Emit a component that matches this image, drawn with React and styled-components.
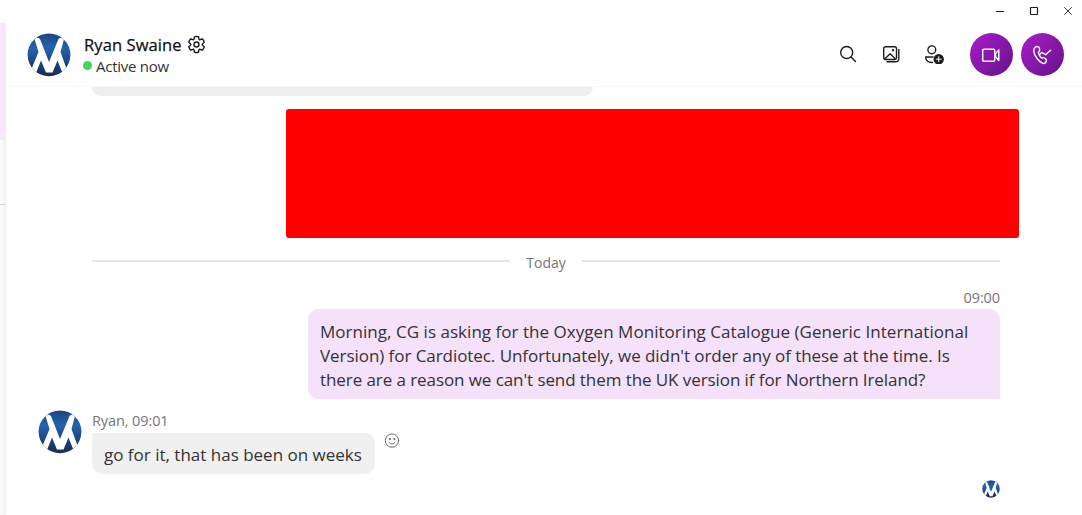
import React from "react";
import styled, { createGlobalStyle } from "styled-components";

const GlobalStyle = createGlobalStyle`
  * {
    box-sizing: border-box;
  }

  body {
    margin: 0;
    background: #ffffff;
    overflow: hidden;
    font-family: "Open Sans", "Noto Sans", sans-serif;
    color: #212121;
  }
`;

const Window = styled.div`
  display: flex;
  width: 1082px;
  height: 515px;
  background: #ffffff;
`;

const Sidebar = styled.div`
  display: flex;
  flex-direction: column;
  flex: none;
  width: 6px;
  padding-top: 23px;
`;

const SidebarItem = styled.div`
  flex: ${props => (props.$height ? "none" : 1)};
  height: ${props => (props.$height ? `${props.$height}px` : "auto")};
  background: ${props =>
    props.$active
      ? "linear-gradient(90deg, #f7e6fc 0 3px, #f3e6f7 5px, #f4f1f5 6px)"
      : "linear-gradient(90deg, #fcfcfc, #f8f8f8 3px, #efefef 6px)"};
  border-bottom: ${props => (props.$line ? "1px solid #dcdcdc" : "none")};
`;

const Main = styled.div`
  display: flex;
  flex-direction: column;
  flex: 1;
  min-width: 0;
`;

const TitleBar = styled.div`
  display: flex;
  flex: none;
  justify-content: flex-end;
  height: 23px;
  padding: 6px 9px 0 0;
  gap: 24px;
`;

const Header = styled.header`
  display: flex;
  align-items: center;
  flex: none;
  height: 64px;
  padding: 0 18px 0 21px;
  border-bottom: 1px solid #f8f8f8;
`;

const Contact = styled.div`
  display: flex;
  flex-direction: column;
  flex: 1;
  margin-left: 13px;
`;

const Name = styled.div`
  display: flex;
  align-items: center;
  gap: 5px;
  height: 22px;
  font-size: 16.5px;
  font-weight: 500;
  white-space: nowrap;
  color: #111111;
  -webkit-text-stroke: 0.25px #111111;
`;

const Status = styled.div`
  display: flex;
  align-items: center;
  gap: 4px;
  height: 21px;
  font-size: 15px;
  color: #333333;
`;

const Dot = styled.span`
  width: 9px;
  height: 9px;
  margin-left: -1px;
  border-radius: 50%;
  background: #43d65a;
`;

const Actions = styled.div`
  display: flex;
  align-items: center;
  gap: 23px;
  margin: -1px 26px 0 0;
`;

const Calls = styled.div`
  display: flex;
  gap: 8px;
`;

const CallButton = styled.button`
  display: flex;
  align-items: center;
  justify-content: center;
  width: 43px;
  height: 43px;
  padding: 0 1px 0 0;
  border: none;
  border-radius: 50%;
  background: linear-gradient(135deg, #a31bc4 10%, #6b148f 90%);
`;

const Chat = styled.main`
  display: flex;
  flex-direction: column;
  flex: 1;
  width: 994px;
  padding-left: 86px;
`;

const PreviousBubble = styled.div`
  flex: none;
  width: 501px;
  height: 9px;
  border-radius: 0 0 10px 10px;
  background: #efefef;
`;

const Redacted = styled.div`
  flex: none;
  align-self: flex-end;
  width: 733px;
  height: 129px;
  margin: 13px -19px 0 0;
  border-radius: 3px;
  background: #ff0000;
`;

const DayDivider = styled.div`
  display: flex;
  align-items: center;
  flex: none;
  gap: 16px;
  height: 24px;
  margin-top: 12px;
  font-size: 14px;
  color: #767676;

  &::before,
  &::after {
    content: "";
    flex: 1;
    height: 2px;
    margin-bottom: 2px;
    background: #e5e5e5;
  }
`;

const Sent = styled.section`
  display: flex;
  flex-direction: column;
  align-items: flex-end;
  flex: none;
  margin-top: 14px;
`;

const Meta = styled.div`
  height: ${props => (props.$tall ? "23px" : "21px")};
  font-size: 14.5px;
  line-height: ${props => (props.$tall ? "22px" : "20px")};
  letter-spacing: -0.1px;
  white-space: nowrap;
  color: #767676;
`;

const Bubble = styled.div`
  padding: ${props => (props.$mine ? "11px 12px 7px" : "10px 12px 7px")};
  border-radius: ${props => (props.$mine ? "10px 10px 0 10px" : "0 10px 10px 10px")};
  background: ${props => (props.$mine ? "#f5e1fa" : "#f0f0f0")};
  font-size: 17px;
  line-height: 24px;
  color: #333333;
`;

const SentBubble = styled(Bubble)`
  width: 692px;
  height: 90px;
`;

const ReplyBubble = styled(Bubble)`
  width: 283px;
  height: 41px;
`;

const Line = styled.div`
  width: max-content;
  letter-spacing: ${props => props.$spacing || "0"};
  white-space: nowrap;
`;

const Received = styled.section`
  display: flex;
  flex: none;
  gap: 10px;
  margin: 11px 0 0 -54px;
`;

const BubbleRow = styled.div`
  display: flex;
  align-items: flex-start;
  gap: 9px;
`;

const SeenRow = styled.div`
  display: flex;
  justify-content: flex-end;
  margin-top: 6px;
`;

const Logo = styled.svg`
  flex: none;
`;

const Avatar = ({ size, id }) => (
  <Logo width={size} height={size} viewBox="0 0 44 44">
    <defs>
      <linearGradient id={id} x1="0" y1="0" x2="0" y2="1">
        <stop offset="0" stopColor="#1f447f" />
        <stop offset="0.35" stopColor="#2363b0" />
        <stop offset="0.7" stopColor="#1c427d" />
        <stop offset="1" stopColor="#192b52" />
      </linearGradient>
      <clipPath id={`${id}-clip`}>
        <circle cx="22" cy="21.8" r="21.4" />
      </clipPath>
    </defs>
    <g clipPath={`url(#${id}-clip)`}>
      <rect width="44" height="44" fill={`url(#${id})`} />
      <path
        d="M7.5 6 Q10 3.5 13 6 L22 29 L31.5 6 Q34 3.5 37 6 L33.5 19 L40 37 L35.5 40 L30.5 27.5 L25.5 39.5 H19 L14 27.5 L9 40 L4 37 L11.5 19 Z"
        fill="#ffffff"
      />
    </g>
  </Logo>
);

const Icon = ({ size = 20, color = "#1d1d1d", width = 1.4, children }) => (
  <svg
    width={size}
    height={size}
    viewBox="0 0 20 20"
    fill="none"
    stroke={color}
    strokeWidth={width}
    strokeLinecap="round"
    strokeLinejoin="round"
  >
    {children}
  </svg>
);

const App = () => (
  <Window>
    <GlobalStyle />
    <Sidebar>
      <SidebarItem $active $height={117} />
      <SidebarItem $line $height={65} />
      <SidebarItem />
    </Sidebar>
    <Main>
      <TitleBar>
        <Icon size={10} width={2}>
          <path d="M3 11H17" />
        </Icon>
        <Icon size={10} width={2.4}>
          <rect x="3" y="3" width="14" height="14" rx="1" />
        </Icon>
        <Icon size={10} width={1.8}>
          <path d="M3 3L17 17M17 3L3 17" />
        </Icon>
      </TitleBar>
      <Header>
        <Avatar size={44} id="header" />
        <Contact>
          <Name>
            <Line $spacing="0.1px">Ryan Swaine</Line>
            <Icon size={19} width={1.5}>
              <path d="M1.91 7.38A8.5 8.5 0 0 1 3.69 4.3a.5.5 0 0 1 .54-.13l1.92.68a1 1 0 0 0 1.32-.76l.36-2a.5.5 0 0 1 .4-.4 8.53 8.53 0 0 1 3.55 0c.2.04.35.2.38.4l.37 2a1 1 0 0 0 1.32.76l1.92-.68a.5.5 0 0 1 .54.13 8.5 8.5 0 0 1 1.78 3.08c.06.2 0 .4-.15.54l-1.56 1.32a1 1 0 0 0 0 1.52l1.56 1.32a.5.5 0 0 1 .15.54 8.5 8.5 0 0 1-1.78 3.08.5.5 0 0 1-.54.13l-1.92-.68a1 1 0 0 0-1.32.76l-.37 2a.5.5 0 0 1-.38.4 8.53 8.53 0 0 1-3.56 0 .5.5 0 0 1-.39-.4l-.36-2a1 1 0 0 0-1.32-.76l-1.92.68a.5.5 0 0 1-.54-.13 8.5 8.5 0 0 1-1.78-3.08.5.5 0 0 1 .15-.54l1.56-1.32a1 1 0 0 0 0-1.52L2.06 7.92a.5.5 0 0 1-.15-.54z" />
              <circle cx="10" cy="10" r="2.6" />
            </Icon>
          </Name>
          <Status>
            <Dot />
            <Line $spacing="-0.25px">Active now</Line>
          </Status>
        </Contact>
        <Actions>
          <Icon>
            <circle cx="8.7" cy="8.5" r="6" />
            <path d="M13.1 13L17.5 17.5" />
          </Icon>
          <Icon>
            <rect x="2.7" y="2.7" width="12.8" height="12.8" rx="2" />
            <path d="M17.8 5.5V14.5Q17.8 17.8 14.5 17.8H6" />
            <path d="M4 14.8L9.1 9.8L14.2 14.8" />
            <circle cx="12" cy="6.2" r="0.5" />
          </Icon>
          <Icon>
            <circle cx="7.8" cy="5.8" r="3.9" />
            <path d="M9 13H1.7C1.7 16.8 4.4 18.6 8.5 18.5" />
            <circle cx="14.7" cy="15.2" r="4.5" fill="#1d1d1d" />
            <path d="M14.7 12.7V17.7M12.2 15.2H17.2" stroke="#ffffff" strokeWidth="1" />
          </Icon>
        </Actions>
        <Calls>
          <CallButton>
            <Icon color="#ffffff" width={1.4}>
              <rect x="1.7" y="4.2" width="12" height="12" rx="1.2" />
              <path d="M14.6 8.6L17.8 4.9V15.5L14.6 11.8Z" />
            </Icon>
          </CallButton>
          <CallButton>
            <Icon color="#ffffff" width={1.4}>
              <path d="M3 2.5C5 .8 7 1.5 7.5 3.5C8 5.5 7.5 6.5 6.4 7.3C6.5 9 8.4 12.4 10 13C11.5 12.3 12.8 12.7 13.8 14C15 15.8 14.5 17.5 12.5 18.3C8.5 19.5 1.5 10 1.8 5.5C1.9 4 2.2 3.2 3 2.5Z" />
              <path d="M8.2 9.3Q9 7.2 10.8 8L13.6 9.7L18.6 5.2" />
            </Icon>
          </CallButton>
        </Calls>
      </Header>
      <Chat>
        <PreviousBubble />
        <Redacted />
        <DayDivider>Today</DayDivider>
        <Sent>
          <Meta>09:00</Meta>
          <SentBubble $mine>
            <Line $spacing="0.035px">
              Morning, CG is asking for the Oxygen Monitoring Catalogue (Generic International
            </Line>
            <Line $spacing="-0.06px">
              Version) for Cardiotec. Unfortunately, we didn't order any of these at the time. Is
            </Line>
            <Line $spacing="-0.08px">
              there are a reason we can't send them the UK version if for Northern Ireland?
            </Line>
          </SentBubble>
        </Sent>
        <Received>
          <Avatar size={44} id="reply" />
          <div>
            <Meta $tall>Ryan, 09:01</Meta>
            <BubbleRow>
              <ReplyBubble>
                <Line>go for it, that has been on weeks</Line>
              </ReplyBubble>
              <Icon size={16} width={1.2} color="#666666">
                <circle cx="10" cy="9.5" r="8.3" />
                <path d="M6.2 11.7Q10 15.8 13.8 11.7" />
                <circle cx="7.2" cy="7.5" r="0.7" fill="#666666" />
                <circle cx="12.8" cy="7.5" r="0.7" fill="#666666" />
              </Icon>
            </BubbleRow>
          </div>
        </Received>
        <SeenRow>
          <Avatar size={18} id="seen" />
        </SeenRow>
      </Chat>
    </Main>
  </Window>
);

export default App;
